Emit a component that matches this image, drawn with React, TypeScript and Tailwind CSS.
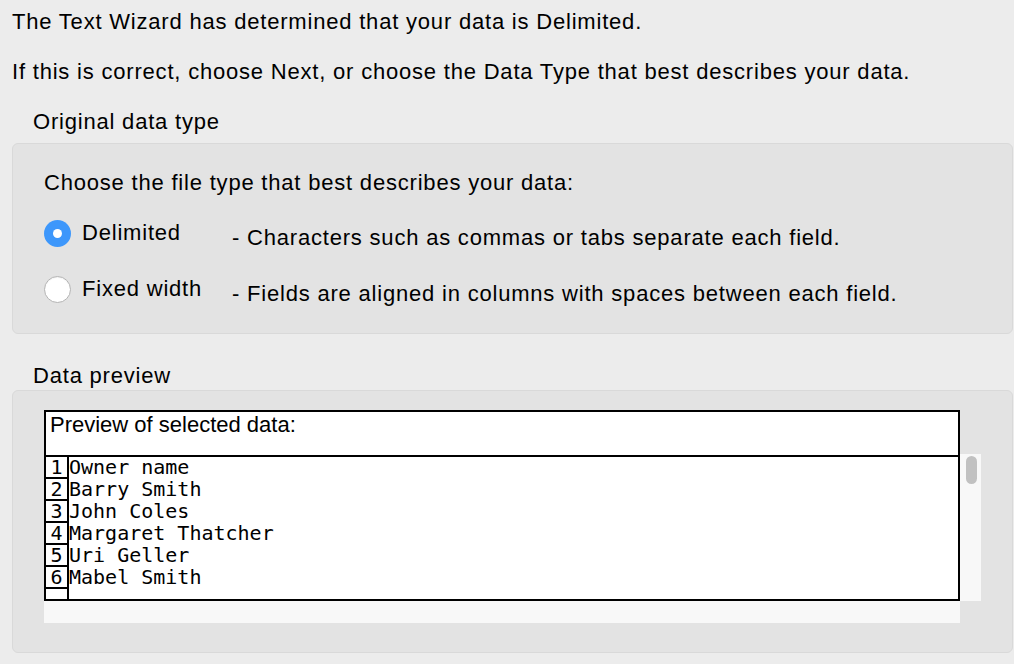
const rows = ["Owner name", "Barry Smith", "John Coles", "Margaret Thatcher", "Uri Geller", "Mabel Smith"];

function Radio({ checked }: { checked?: boolean }) {
  if (checked) {
    return (
      <span className="flex items-center justify-center w-[27px] h-[27px] rounded-full bg-[#3d97fb]">
        <span className="w-[9px] h-[9px] rounded-full bg-white" />
      </span>
    );
  }
  return <span className="block w-[27px] h-[27px] rounded-full bg-white border border-[#b3b3b3] shadow-[inset_0_1px_1px_rgba(0,0,0,0.05)]" />;
}

function OptionRow({ label, desc, checked }: { label: string; desc: string; checked?: boolean }) {
  return (
    <div className="flex items-center h-[28px]">
      <Radio checked={checked} />
      <span className="ml-[11px] w-[150px] -mt-[1px]">{label}</span>
      <span className="mt-[9px]">{desc}</span>
    </div>
  );
}

export default function App() {
  return (
    <div
      className="w-[1014px] h-[664px] overflow-hidden bg-[#ececec] text-black text-[22px] leading-[24px] tracking-[0.8px]"
      style={{ fontFamily: '"Liberation Sans", Arial, sans-serif' }}
    >
      <div className="pl-[12px] pt-[10px]">The Text Wizard has determined that your data is Delimited.</div>
      <div className="pl-[12px] mt-[26px]">If this is correct, choose Next, or choose the Data Type that best describes your data.</div>

      <div className="pl-[33px] mt-[26px]">Original data type</div>
      <div className="ml-[12px] mt-[9px] w-[1001px] h-[191px] rounded-[6px] border border-[#d9d9d9] bg-[#e3e3e3] pl-[31px] pt-[27px]">
        <div>Choose the file type that best describes your data:</div>
        <div className="mt-[24px] flex flex-col gap-[28px]">
          <OptionRow checked label="Delimited" desc="- Characters such as commas or tabs separate each field." />
          <OptionRow label="Fixed width" desc="- Fields are aligned in columns with spaces between each field." />
        </div>
      </div>

      <div className="pl-[33px] mt-[30px]">Data preview</div>
      <div className="ml-[12px] mt-[2px] w-[1001px] h-[263px] rounded-[6px] border border-[#d9d9d9] bg-[#e3e3e3] pl-[31px] pt-[19px] flex">
        <div className="flex flex-col">
          <div className="w-[916px] h-[191px] border-2 border-black bg-white flex flex-col overflow-hidden">
            <div className="h-[45px] border-b-2 border-black pl-[4px] pt-[1px] shrink-0 tracking-normal">Preview of selected data:</div>
            <div
              style={{ fontFamily: '"DejaVu Sans Mono", "Liberation Mono", monospace' }}
              className="text-[20px] leading-[22px] tracking-normal"
            >
              {rows.map((r, i) => (
                <div key={r} className="flex h-[22px]">
                  <span className="w-[23px] border-b-2 border-r-2 border-black text-center leading-[20px] shrink-0">{i + 1}</span>
                  <span className="leading-[21px]">{r}</span>
                </div>
              ))}
              <div className="flex h-[22px]">
                <span className="w-[23px] border-r-2 border-black shrink-0" />
              </div>
            </div>
          </div>
          <div className="w-[916px] h-[22px] bg-[#f8f8f8]" />
        </div>
        <div className="mt-[44px] w-[21px] h-[147px] bg-[#f8f8f8] pt-[2px] pl-[6px]">
          <div className="w-[11px] h-[28px] rounded-full bg-[#c1c1c1]" />
        </div>
      </div>
    </div>
  );
}
